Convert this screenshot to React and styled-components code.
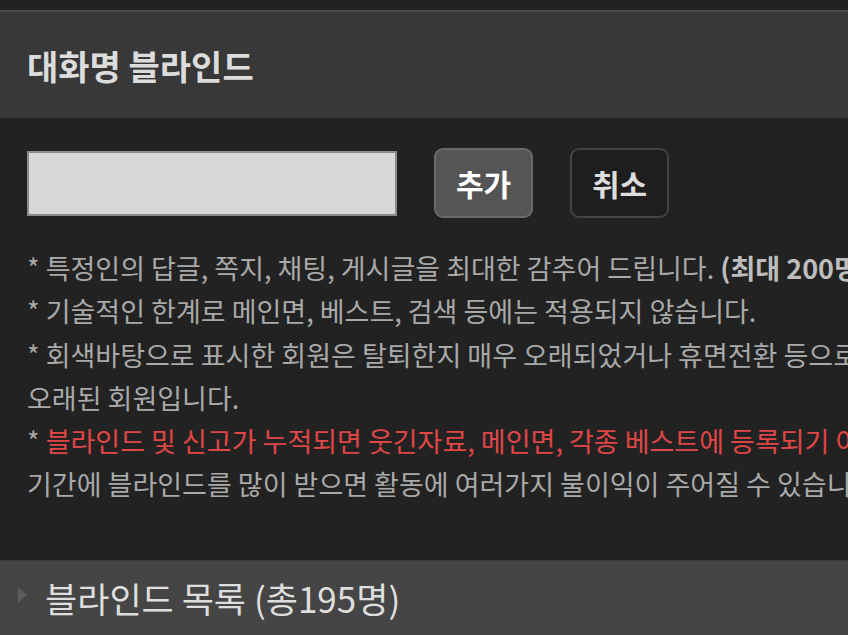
import React from "react";
import styled, { createGlobalStyle } from "styled-components";

const Global = createGlobalStyle`
  html, body {
    margin: 0;
    padding: 0;
    background: #222222;
    overflow: hidden;
  }
  body {
    font-family: "Noto Sans CJK KR", "Noto Sans", sans-serif;
  }
`;

const Page = styled.div`
  width: 848px;
  height: 635px;
  overflow: hidden;
  background: #222222;
  padding-top: 10px;
  box-sizing: border-box;
`;

const Header = styled.div`
  height: 108px;
  background: #383838;
  border-top: 2px solid #4a4a4a;
  box-sizing: border-box;
  display: flex;
  align-items: center;
  padding-left: 27px;
`;

const Title = styled.h2`
  margin: 0;
  font-size: 34px;
  font-weight: 700;
  color: #dcdcdc;
`;

const Body = styled.div`
  background: #222222;
  padding: 30px 0 54px 27px;
`;

const FormRow = styled.div`
  display: flex;
  align-items: center;
  gap: 37px;
`;

const NameInput = styled.input`
  width: 370px;
  height: 65px;
  box-sizing: border-box;
  background: #d8d8d8;
  border: 2px solid #8a8a8a;
  border-radius: 0;
  outline: none;
`;

const Button = styled.button`
  width: 99px;
  height: 70px;
  box-sizing: border-box;
  border-radius: 9px;
  font-family: inherit;
  font-size: 30px;
  font-weight: 700;
  padding: 0;
  cursor: pointer;
  background: ${(p) => (p.$primary ? "#555555" : "#1e1e1e")};
  border: 2px solid ${(p) => (p.$primary ? "#6a6a6a" : "#444444")};
  color: ${(p) => (p.$primary ? "#ffffff" : "#dddddd")};
`;

const Notes = styled.div`
  margin-top: 28px;
  font-size: 27px;
  line-height: 43.3px;
  color: #a9a9a9;
  white-space: nowrap;
`;

const Line = styled.div``;

const Strong = styled.b`
  color: #bdbdbd;
  font-weight: 700;
`;

const Warn = styled.span`
  color: #e04646;
`;

const ListBar = styled.div`
  height: 74px;
  background: #454545;
  display: flex;
  align-items: center;
  padding-left: 18px;
  gap: 18px;
  border-top: 1px solid #3a3a3a;
`;

const Arrow = styled.span`
  width: 0;
  height: 0;
  border-top: 8px solid transparent;
  border-bottom: 8px solid transparent;
  border-left: 9px solid #5c5c5c;
  margin-top: -6px;
`;

const ListTitle = styled.div`
  font-size: 35px;
  color: #dedede;
  font-weight: 400;
`;

export default function App() {
  return (
    <Page>
      <Global />
      <Header>
        <Title>대화명 블라인드</Title>
      </Header>
      <Body>
        <FormRow>
          <NameInput type="text" />
          <Button $primary>추가</Button>
          <Button>취소</Button>
        </FormRow>
        <Notes>
          <Line>
            * 특정인의 답글, 쪽지, 채팅, 게시글을 최대한 감추어 드립니다.{" "}
            <Strong>(최대 200명)</Strong>
          </Line>
          <Line>* 기술적인 한계로 메인면, 베스트, 검색 등에는 적용되지 않습니다.</Line>
          <Line>
            * 회색바탕으로 표시한 회원은 탈퇴한지 매우 오래되었거나 휴면전환 등으로 활동한지
          </Line>
          <Line>오래된 회원입니다.</Line>
          <Line>
            * <Warn>블라인드 및 신고가 누적되면 웃긴자료, 메인면, 각종 베스트에 등록되기 어려우며,</Warn> 일정
          </Line>
          <Line>기간에 블라인드를 많이 받으면 활동에 여러가지 불이익이 주어질 수 있습니다.</Line>
        </Notes>
      </Body>
      <ListBar>
        <Arrow />
        <ListTitle>블라인드 목록 (총195명)</ListTitle>
      </ListBar>
    </Page>
  );
}
